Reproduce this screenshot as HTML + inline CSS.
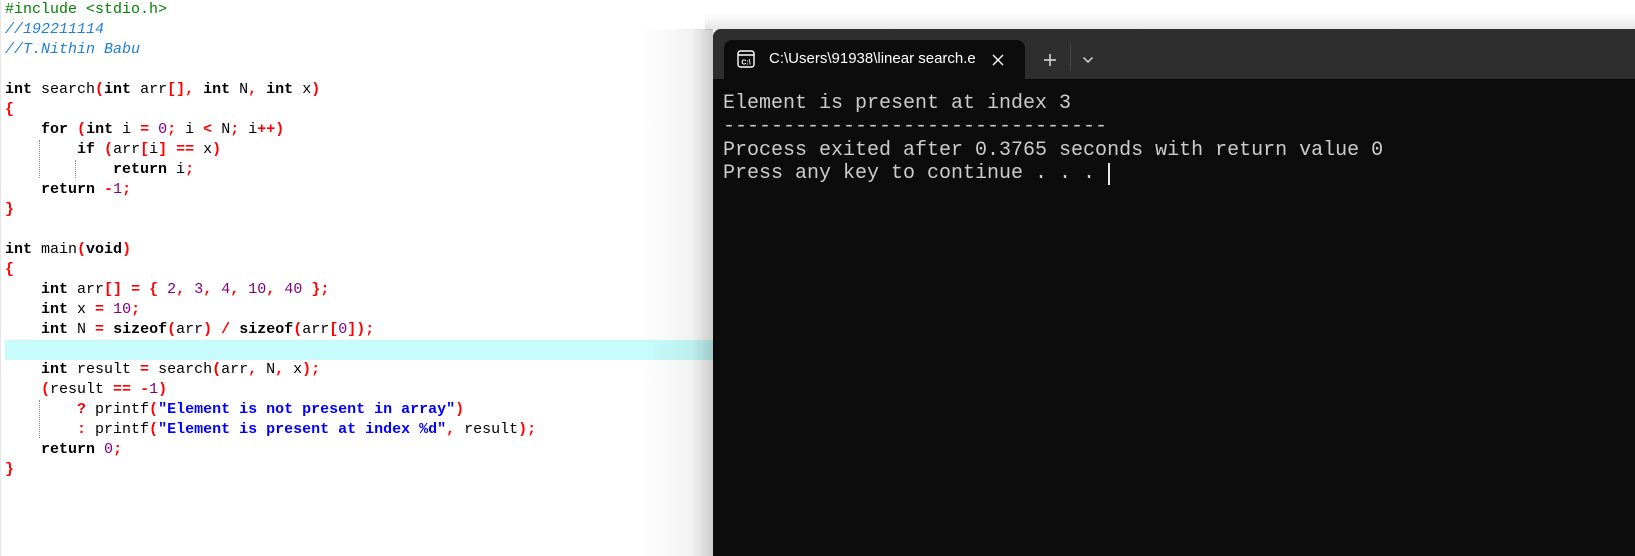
<!DOCTYPE html>
<html><head><meta charset="utf-8"><style>
html,body{margin:0;padding:0;width:1635px;height:556px;overflow:hidden;background:#fff;position:relative}
.ed{position:absolute;left:0;top:0;width:720px;height:556px;border-left:1px solid #e6e6e6}
.hl{position:absolute;left:4px;top:340px;width:712px;height:20px;background:#c8fcfc}
pre{position:absolute;left:4px;top:0;margin:0;font:15px/20px "Liberation Mono",monospace;color:#000}
.k{font-weight:bold;color:#000}
.s{font-weight:bold;color:#f00}
.n{color:#800080}
.q{font-weight:bold;color:#0000ff}
.c{font-style:italic;color:#1e7fd6}
.p{color:#008000}
.g{position:absolute;width:0;border-left:1px dotted #888}
.shadow{position:absolute;left:640px;top:29px;width:73px;height:527px;background:linear-gradient(to right,rgba(0,0,0,0),rgba(0,0,0,0.05) 70%,rgba(0,0,0,0.2))}
.topsh{position:absolute;left:705px;top:14px;width:930px;height:16px;background:linear-gradient(to bottom,rgba(0,0,0,0),rgba(0,0,0,0.1))}
.term{position:absolute;left:713px;top:29px;width:940px;height:540px;background:#0c0c0c;border-top-left-radius:8px;overflow:hidden}
.bar{position:absolute;left:0;top:0;right:0;height:50px;background:#2e2e2e}
.tab{position:absolute;left:11px;top:11px;width:301px;height:40px;background:#0c0c0c;border-radius:8px 8px 0 0}
.title{position:absolute;left:45px;top:10px;font:15px "Liberation Sans",sans-serif;color:#fff;white-space:nowrap}
.out{position:absolute;left:10px;top:63px;margin:0;font:20px/23.3px "Liberation Mono",monospace;color:#cccccc}
.cur{position:absolute;left:395px;top:134px;width:2px;height:22px;background:#e6e6e6}
</style></head><body>
<div class="ed">
<div class="hl"></div>
<div class="g" style="left:38px;top:140px;height:38px"></div>
<div class="g" style="left:74px;top:160px;height:18px"></div>
<div class="g" style="left:38px;top:400px;height:38px"></div>
<pre><span class="p">#include &lt;stdio.h&gt;</span>
<span class="c">//192211114</span>
<span class="c">//T.Nithin Babu</span>

<span class="k">int</span> search<span class="s">(</span><span class="k">int</span> arr<span class="s">[],</span> <span class="k">int</span> N<span class="s">,</span> <span class="k">int</span> x<span class="s">)</span>
<span class="s">{</span>
    <span class="k">for</span> <span class="s">(</span><span class="k">int</span> i <span class="s">=</span> <span class="n">0</span><span class="s">;</span> i <span class="s">&lt;</span> N<span class="s">;</span> i<span class="s">++)</span>
        <span class="k">if</span> <span class="s">(</span>arr<span class="s">[</span>i<span class="s">]</span> <span class="s">==</span> x<span class="s">)</span>
            <span class="k">return</span> i<span class="s">;</span>
    <span class="k">return</span> <span class="s">-</span><span class="n">1</span><span class="s">;</span>
<span class="s">}</span>

<span class="k">int</span> main<span class="s">(</span><span class="k">void</span><span class="s">)</span>
<span class="s">{</span>
    <span class="k">int</span> arr<span class="s">[]</span> <span class="s">=</span> <span class="s">{</span> <span class="n">2</span><span class="s">,</span> <span class="n">3</span><span class="s">,</span> <span class="n">4</span><span class="s">,</span> <span class="n">10</span><span class="s">,</span> <span class="n">40</span> <span class="s">};</span>
    <span class="k">int</span> x <span class="s">=</span> <span class="n">10</span><span class="s">;</span>
    <span class="k">int</span> N <span class="s">=</span> <span class="k">sizeof</span><span class="s">(</span>arr<span class="s">)</span> <span class="s">/</span> <span class="k">sizeof</span><span class="s">(</span>arr<span class="s">[</span><span class="n">0</span><span class="s">]);</span>

    <span class="k">int</span> result <span class="s">=</span> search<span class="s">(</span>arr<span class="s">,</span> N<span class="s">,</span> x<span class="s">);</span>
    <span class="s">(</span>result <span class="s">==</span> <span class="s">-</span><span class="n">1</span><span class="s">)</span>
        <span class="s">?</span> printf<span class="s">(</span><span class="q">"Element is not present in array"</span><span class="s">)</span>
        <span class="s">:</span> printf<span class="s">(</span><span class="q">"Element is present at index %d"</span><span class="s">,</span> result<span class="s">);</span>
    <span class="k">return</span> <span class="n">0</span><span class="s">;</span>
<span class="s">}</span></pre>
</div>
<div class="shadow"></div>
<div class="topsh"></div>
<div class="term">
<div class="bar"></div>
<div class="tab">
<svg style="position:absolute;left:13px;top:10px" width="18" height="18" viewBox="0 0 18 18"><rect x="1" y="1" width="16" height="16" rx="2.5" fill="none" stroke="#fff" stroke-width="1.4"/><line x1="1" y1="5" x2="17" y2="5" stroke="#fff" stroke-width="1.4"/><text x="9" y="14.5" font-family="Liberation Sans,sans-serif" font-size="7" font-weight="bold" fill="#fff" text-anchor="middle">C:\</text></svg>
<div class="title">C:\Users\91938\linear search.e</div>
<svg style="position:absolute;left:267px;top:13px" width="14" height="14" viewBox="0 0 14 14"><path d="M2 2L12 12M12 2L2 12" stroke="#fff" stroke-width="1.4"/></svg>
</div>
<svg style="position:absolute;left:330px;top:24px" width="14" height="14" viewBox="0 0 14 14"><path d="M7 1V13M1 7H13" stroke="#ddd" stroke-width="1.5"/></svg>
<div style="position:absolute;left:357px;top:14px;width:1px;height:28px;background:#444"></div>
<svg style="position:absolute;left:369px;top:27px" width="12" height="8" viewBox="0 0 12 8"><path d="M1.5 1.5L6 6L10.5 1.5" stroke="#ddd" stroke-width="1.4" fill="none"/></svg>
<pre class="out">Element is present at index 3
--------------------------------
Process exited after 0.3765 seconds with return value 0
Press any key to continue . . . </pre>
<div class="cur"></div>
</div>
</body></html>
